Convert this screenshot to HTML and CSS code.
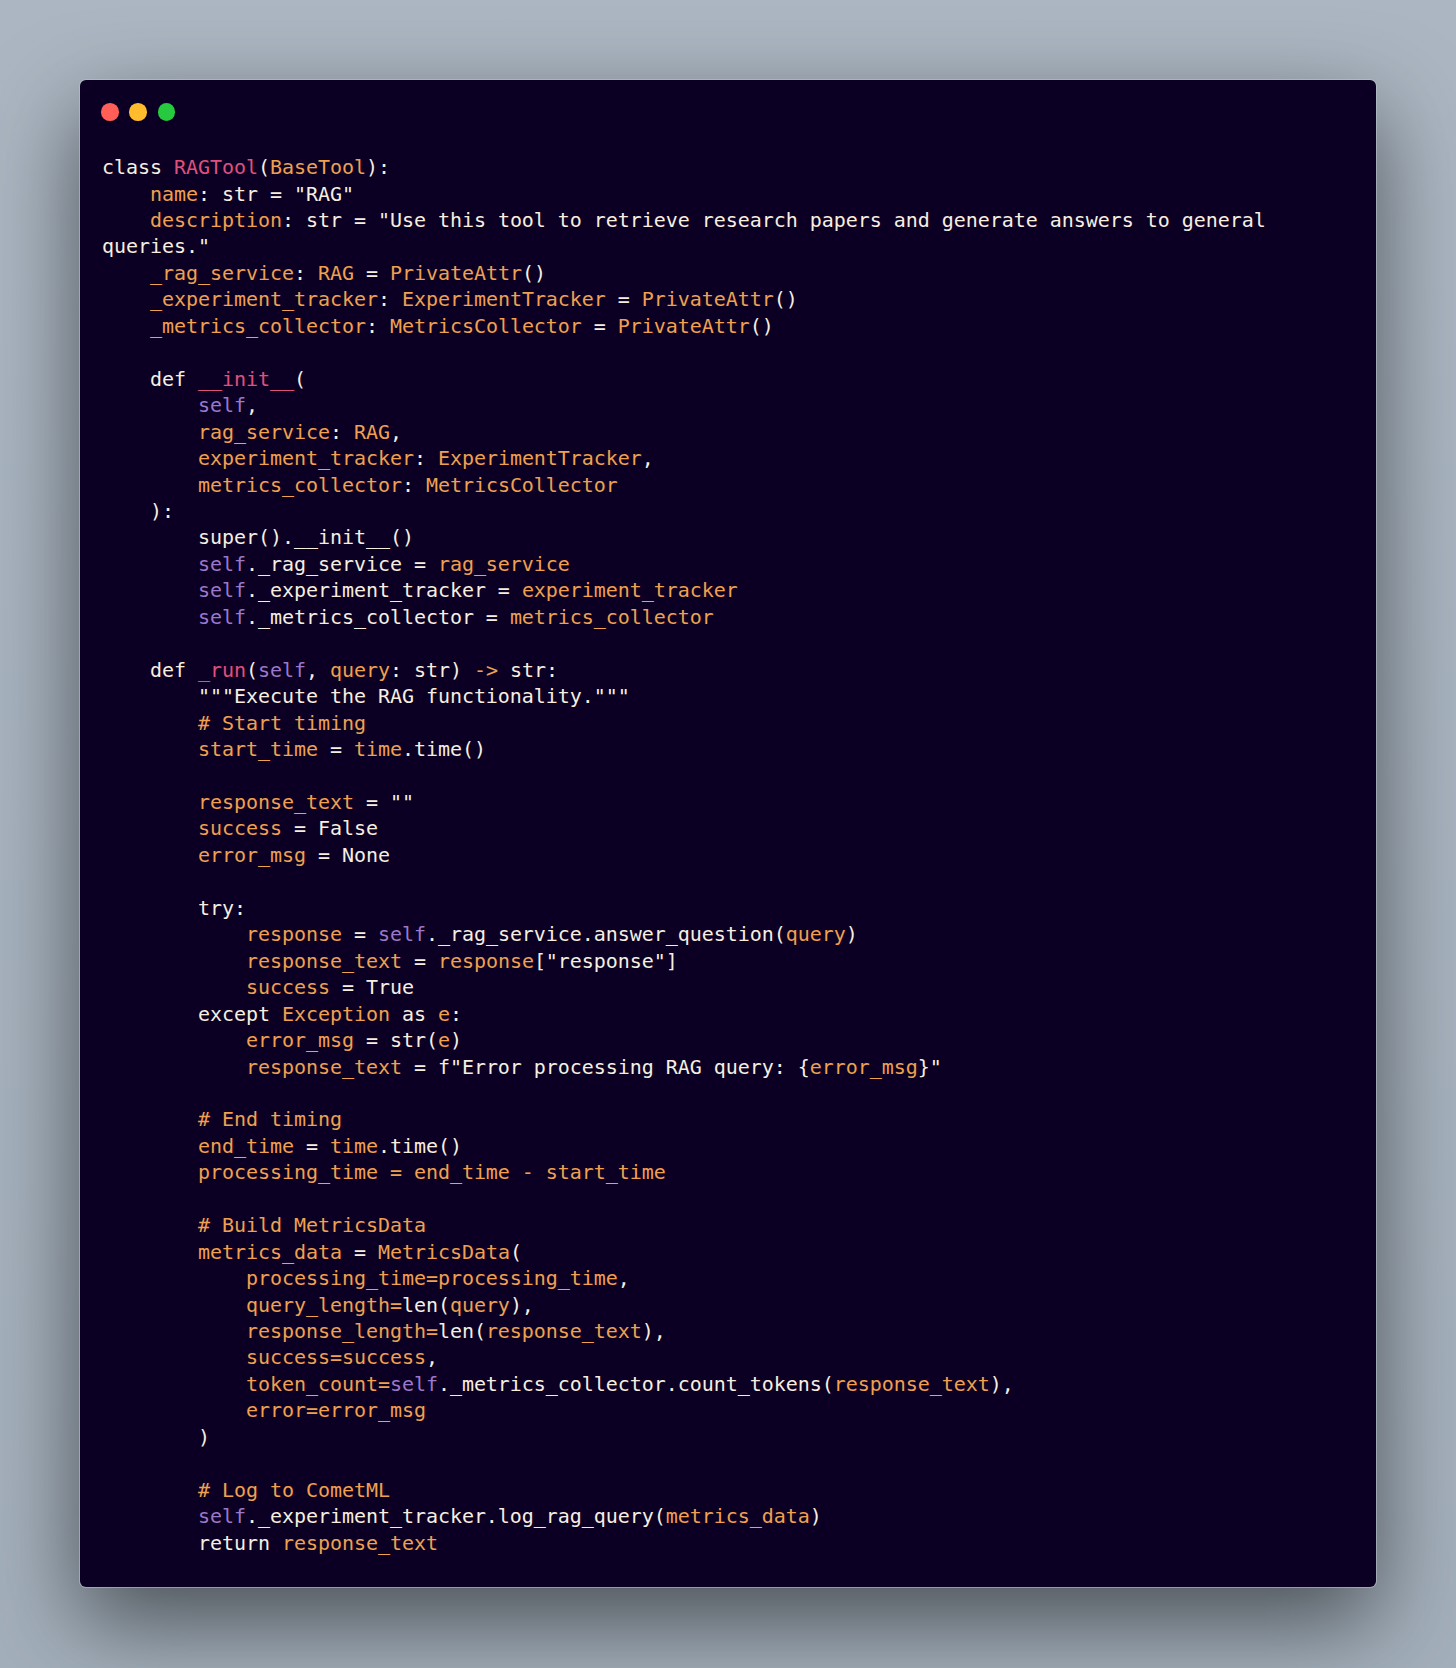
FILE: index.html
```html
<!DOCTYPE html>
<html lang="en">
<head>
    <meta charset="UTF-8">
    <title>RAGTool</title>
    <link rel="stylesheet" href="styles.css">
</head>
<body>
    <div class="window">
        <div class="controls">
            <span class="dot red"></span>
            <span class="dot yellow"></span>
            <span class="dot green"></span>
        </div>
<pre class="code">class <span class="p">RAGTool</span>(<span class="o">BaseTool</span>):
    <span class="o">name</span>: str = "RAG"
    <span class="o">description</span>: str = "Use this tool to retrieve research papers and generate answers to general
queries."
    <span class="o">_rag_service</span>: <span class="o">RAG</span> = <span class="o">PrivateAttr</span>()
    <span class="o">_experiment_tracker</span>: <span class="o">ExperimentTracker</span> = <span class="o">PrivateAttr</span>()
    <span class="o">_metrics_collector</span>: <span class="o">MetricsCollector</span> = <span class="o">PrivateAttr</span>()

    def <span class="p">__init__</span>(
        <span class="v">self</span>,
        <span class="o">rag_service</span>: <span class="o">RAG</span>,
        <span class="o">experiment_tracker</span>: <span class="o">ExperimentTracker</span>,
        <span class="o">metrics_collector</span>: <span class="o">MetricsCollector</span>
    ):
        super().__init__()
        <span class="v">self</span>._rag_service = <span class="o">rag_service</span>
        <span class="v">self</span>._experiment_tracker = <span class="o">experiment_tracker</span>
        <span class="v">self</span>._metrics_collector = <span class="o">metrics_collector</span>

    def <span class="p">_run</span>(<span class="v">self</span>, <span class="o">query</span>: str) <span class="o">-&gt;</span> str:
        """Execute the RAG functionality."""
        <span class="o"># Start timing</span>
        <span class="o">start_time</span> = <span class="o">time</span>.time()

        <span class="o">response_text</span> = ""
        <span class="o">success</span> = False
        <span class="o">error_msg</span> = None

        try:
            <span class="o">response</span> = <span class="v">self</span>._rag_service.answer_question(<span class="o">query</span>)
            <span class="o">response_text</span> = <span class="o">response</span>["response"]
            <span class="o">success</span> = True
        except <span class="o">Exception</span> as <span class="o">e</span>:
            <span class="o">error_msg</span> = str(<span class="o">e</span>)
            <span class="o">response_text</span> = f"Error processing RAG query: {<span class="o">error_msg</span>}"

        <span class="o"># End timing</span>
        <span class="o">end_time</span> = <span class="o">time</span>.time()
        <span class="o">processing_time = end_time - start_time</span>

        <span class="o"># Build MetricsData</span>
        <span class="o">metrics_data</span> = <span class="o">MetricsData</span>(
            <span class="o">processing_time=processing_time</span>,
            <span class="o">query_length=</span>len(<span class="o">query</span>),
            <span class="o">response_length=</span>len(<span class="o">response_text</span>),
            <span class="o">success=success</span>,
            <span class="o">token_count=</span><span class="v">self</span>._metrics_collector.count_tokens(<span class="o">response_text</span>),
            <span class="o">error=error_msg</span>
        )

        <span class="o"># Log to CometML</span>
        <span class="v">self</span>._experiment_tracker.log_rag_query(<span class="o">metrics_data</span>)
        return <span class="o">response_text</span></pre>
    </div>
</body>
</html>
```

FILE: styles.css
```css
html {
    background: linear-gradient(to bottom, #abb6c2, #a3afbb);
}
body {
    margin: 0;
    padding: 80px;
    min-height: 1508px;
}
.window {
    background: #0b0024;
    border-radius: 6px;
    box-shadow: 0 0 0 1px rgba(190, 198, 210, 0.55), 0 34px 90px rgba(0, 0, 0, 0.55);
    padding: 23px 22px 31px 21px;
}
.controls {
    display: flex;
    gap: 10.8px;
    height: 17.5px;
}
.dot {
    width: 17.5px;
    height: 17.5px;
    border-radius: 50%;
}
.red { background: #ff5f56; }
.yellow { background: #ffbd2e; }
.green { background: #27c93f; }
.code {
    margin: 33.6px 0 0 1px;
    font-family: "DejaVu Sans Mono", monospace;
    font-size: 20px;
    line-height: 26.46px;
    letter-spacing: -0.045px;
    color: #f6efe0;
    white-space: pre;
}
.o { color: #f0a04f; }
.p { color: #e0507c; }
.v { color: #9a78cc; }
```
